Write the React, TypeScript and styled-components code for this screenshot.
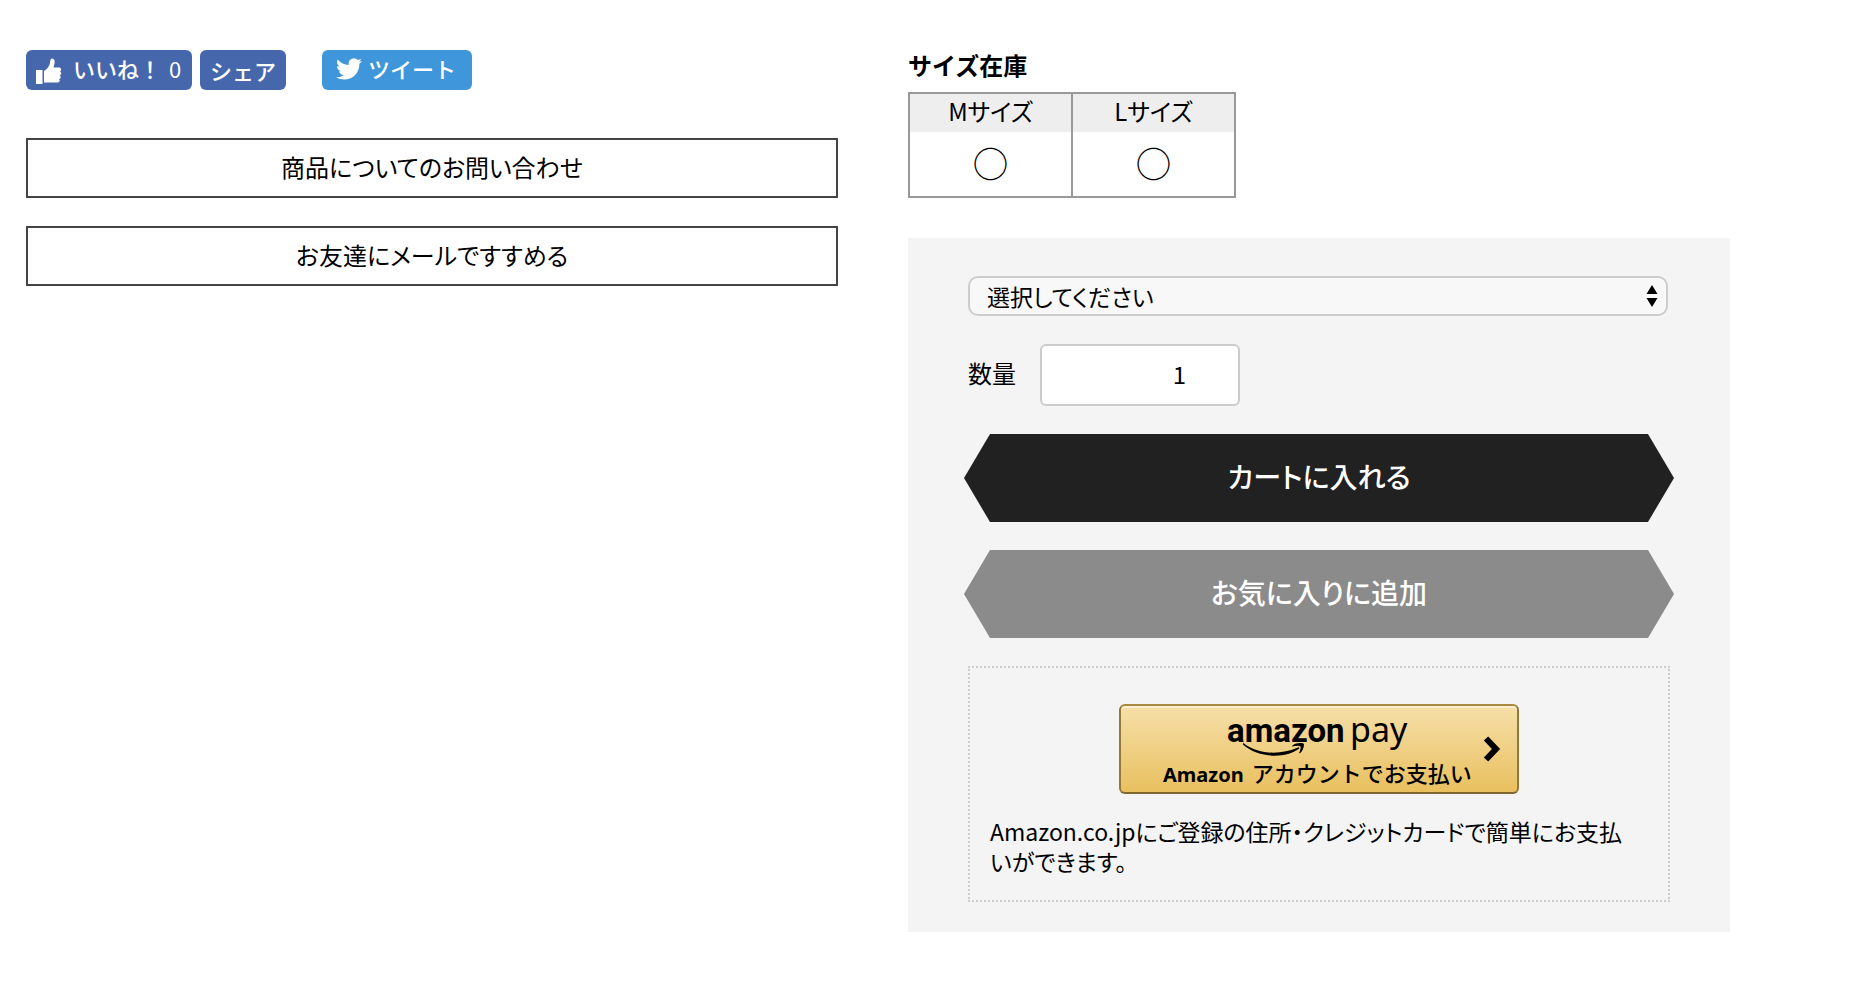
import React from "react";
import styled, { createGlobalStyle } from "styled-components";

const GlobalStyle = createGlobalStyle`
  *, *::before, *::after { box-sizing: border-box; }
  body {
    margin: 0;
    background: #fff;
    color: #000;
    font-family: "Noto Sans CJK JP", sans-serif;
    font-size: 24px;
    line-height: 36px;
    font-feature-settings: "palt";
  }
  button, input, select { font: inherit; color: inherit; font-feature-settings: inherit; }
`;

const Page = styled.main`
  display: grid;
  grid-template-columns: minmax(0, 812fr) minmax(0, 822fr);
  column-gap: 70px;
  align-items: start;
  padding: 50px 132px 50px 26px;
`;

const SocialBar = styled.div`
  display: flex;
  gap: 8px;
  margin-bottom: 48px;
`;

const SocialButton = styled.button<{ $color: string; $width: number }>`
  display: flex;
  align-items: center;
  justify-content: center;
  width: ${(p) => p.$width}px;
  height: 40px;
  padding: 0;
  border: 0;
  border-radius: 6px;
  background: ${(p) => p.$color};
  color: #fff;
  font-size: 22px;
  font-weight: 500;
  line-height: 40px;
  font-feature-settings: normal;
  white-space: nowrap;
  cursor: pointer;
`;

const LikeButton = styled(SocialButton)`
  justify-content: flex-start;
  padding: 0 10px 4px;
`;

const TweetButton = styled(SocialButton)`
  justify-content: flex-start;
  gap: 6px;
  margin-left: 28px;
  padding: 0 14px 4px;
`;

const ThumbIcon = styled.svg`
  width: 26px;
  height: 26px;
  margin: 6px 11px 0 0;
`;

const BirdIcon = styled.svg`
  width: 26px;
  height: 26px;
  margin-top: 2px;
`;

const Count = styled.span`
  margin-left: 8px;
  font-weight: 400;
`;

const LinkList = styled.div`
  display: grid;
  gap: 28px;
`;

const OutlineLink = styled.a`
  display: flex;
  align-items: center;
  justify-content: center;
  height: 60px;
  padding-bottom: 2px;
  border: 2px solid #444;
  color: #000;
  text-decoration: none;
`;

const Heading = styled.h2`
  margin: -3px 0 9px;
  font-size: 24px;
  font-weight: 700;
  line-height: 36px;
  font-feature-settings: normal;
`;

const StockTable = styled.table`
  width: 328px;
  border-collapse: collapse;
  table-layout: fixed;
  border: 2px solid #999;
  text-align: center;
`;

const StockHead = styled.th`
  height: 39px;
  padding: 0 0 4px;
  border-right: 2px solid #999;
  background: #eee;
  font-size: 24px;
  font-weight: 400;
  line-height: 34px;
`;

const StockCell = styled.td`
  height: 65px;
  padding: 0 0 2px;
  border-right: 2px solid #999;
  font-size: 34px;
  font-weight: 700;
  line-height: 48px;
`;

const OrderPanel = styled.form`
  display: flex;
  flex-direction: column;
  margin-top: 40px;
  padding: 38px 60px 30px;
  background: #f4f4f4;
`;

const SelectBox = styled.div`
  display: grid;
  align-items: center;
  margin: 0 2px 28px 0;
`;

const SizeSelect = styled.select`
  grid-area: 1 / 1;
  appearance: none;
  width: 100%;
  height: 40px;
  padding: 0 40px 0 17px;
  border: 2px solid #ccc;
  border-radius: 10px;
  background: #f8f8f8;
  font-size: 23px;
`;

const SelectArrows = styled.svg`
  grid-area: 1 / 1;
  justify-self: end;
  width: 12px;
  height: 22px;
  margin-right: 10px;
  pointer-events: none;
`;

const QuantityRow = styled.div`
  display: flex;
  align-items: center;
  gap: 24px;
  margin-bottom: 28px;
`;

const QuantityLabel = styled.label`
  padding-bottom: 4px;
`;

const QuantityInput = styled.input`
  width: 200px;
  height: 62px;
  padding: 0 52px 4px 12px;
  border: 2px solid #ccc;
  border-radius: 6px;
  background: #fff;
  text-align: right;
`;

const RibbonButton = styled.button<{ $color: string }>`
  height: 88px;
  margin: 0 -4px 28px;
  padding: 0 26px 4px;
  border: 0;
  background: ${(p) => p.$color};
  color: #fff;
  font-size: 28px;
  font-weight: 500;
  clip-path: polygon(0 50%, 26px 0, calc(100% - 26px) 0, 100% 50%, calc(100% - 26px) 100%, 26px 100%);
  cursor: pointer;
`;

const PayBox = styled.section`
  display: flex;
  flex-direction: column;
  align-items: center;
  padding: 36px 20px 24px;
  border: 2px dotted #ccc;
`;

const PayButton = styled.button`
  display: grid;
  grid-template-columns: 1fr 18px;
  align-items: center;
  width: 400px;
  max-width: 100%;
  height: 90px;
  padding: 0 16px 0 42px;
  border: 2px solid #8f7437;
  border-color: #a88a43 #947838 #806631;
  border-radius: 6px;
  background: linear-gradient(#f6dfa9, #e9c05f);
  box-shadow: inset 0 2px 0 #fbeecb;
  cursor: pointer;
`;

const PayLabel = styled.span`
  display: flex;
  flex-direction: column;
  align-items: flex-start;
  padding-top: 6px;
`;

const PayLogo = styled.svg`
  width: 188px;
  height: 42px;
  margin-left: 64px;
  overflow: visible;
`;

const PayText = styled.span`
  display: flex;
  align-items: baseline;
  gap: 8px;
  font-size: 22px;
  font-weight: 500;
  line-height: 32px;
  font-feature-settings: normal;
  white-space: nowrap;
`;

const PayBrand = styled.span`
  font-family: "Noto Sans", sans-serif;
  font-size: 20px;
  font-weight: 700;
`;

const Chevron = styled.svg`
  width: 18px;
  height: 26px;
`;

const PayNote = styled.p`
  align-self: stretch;
  margin: 22px 0 0;
  padding-right: 16px;
  font-size: 23px;
  line-height: 30px;
`;

const sizes = ["Mサイズ", "Lサイズ"];

export default function App() {
  return (
    <>
      <GlobalStyle />
      <Page>
        <div>
          <SocialBar>
            <LikeButton type="button" $color="#4767ad" $width={166}>
              <ThumbIcon viewBox="0 0 26 26" fill="#fff" aria-hidden="true">
                <path d="M0 12h6.500v14H0zM8 13c3-1.500 5.500-5 6-8 .3-2.500.5-4.500 2-4.500 2.300 0 3 2.200 2.600 4.500-.3 1.800-.8 3-1.100 4.500H23c1.500 0 2.200 1 2.200 2s-.6 1.800-1.400 2c1 .3 1.500 1 1.400 2-.1 1-.8 1.700-1.600 1.900.8.4 1.200 1 1.100 1.900-.1 1-.9 1.600-1.700 1.800.6.5.8 1 .7 1.700-.2 1-1 1.700-2.300 1.700H8z" />
              </ThumbIcon>
              いいね！<Count>0</Count>
            </LikeButton>
            <SocialButton type="button" $color="#4767ad" $width={86}>
              シェア
            </SocialButton>
            <TweetButton type="button" $color="#3f96db" $width={150}>
              <BirdIcon viewBox="0 0 24 24" fill="#fff" aria-hidden="true">
                <path d="M23.950 4.570a10 10 0 0 1-2.820.770 4.960 4.960 0 0 0 2.160-2.720c-.950.550-2 .950-3.130 1.180a4.920 4.920 0 0 0-8.380 4.480C7.690 8.100 4.070 6.130 1.640 3.160a4.900 4.900 0 0 0-.670 2.480c0 1.710.870 3.210 2.190 4.100a4.900 4.900 0 0 1-2.230-.620v.060a4.920 4.920 0 0 0 3.950 4.830 5 5 0 0 1-2.210.080 4.940 4.940 0 0 0 4.600 3.420A9.870 9.870 0 0 1 0 19.540a14 14 0 0 0 7.550 2.210c9.050 0 14-7.500 14-13.980 0-.210 0-.420-.020-.630a9.940 9.940 0 0 0 2.460-2.550z" />
              </BirdIcon>
              ツイート
            </TweetButton>
          </SocialBar>
          <LinkList>
            <OutlineLink href="#contact">商品についてのお問い合わせ</OutlineLink>
            <OutlineLink href="#recommend">お友達にメールですすめる</OutlineLink>
          </LinkList>
        </div>

        <div>
          <Heading>サイズ在庫</Heading>
          <StockTable>
            <thead>
              <tr>
                {sizes.map((size) => (
                  <StockHead key={size} scope="col">{size}</StockHead>
                ))}
              </tr>
            </thead>
            <tbody>
              <tr>
                {sizes.map((size) => (
                  <StockCell key={size}>◯</StockCell>
                ))}
              </tr>
            </tbody>
          </StockTable>

          <OrderPanel onSubmit={(e) => e.preventDefault()}>
            <SelectBox>
              <SizeSelect aria-label="サイズ" defaultValue="">
                <option value="">選択してください</option>
                {sizes.map((size) => (
                  <option key={size} value={size}>{size}</option>
                ))}
              </SizeSelect>
              <SelectArrows viewBox="0 0 12 22" aria-hidden="true">
                <path d="M6 0l5.500 9H.5zM.5 13h11L6 22z" />
              </SelectArrows>
            </SelectBox>
            <QuantityRow>
              <QuantityLabel htmlFor="quantity">数量</QuantityLabel>
              <QuantityInput id="quantity" type="text" inputMode="numeric" defaultValue="1" />
            </QuantityRow>
            <RibbonButton type="submit" $color="#212121">カートに入れる</RibbonButton>
            <RibbonButton type="button" $color="#8b8b8b">お気に入りに追加</RibbonButton>
            <PayBox>
              <PayButton type="button">
                <PayLabel>
                  <PayLogo viewBox="0 0 188 42">
                    <text x="0" y="28" fontFamily="Roboto, sans-serif" fontWeight="700" fontSize="33">amazon</text>
                    <text x="123" y="28" fontFamily="'Noto Sans', sans-serif" fontSize="34">pay</text>
                    <path d="M17 29.500C32 41 54 41 71 33.500c1-.5 1.800.5 1 1.200C58 45 31 44 16 30.500c-.6-.8.2-1.500 1-1zM65 32c1.500-2 5-3 8-3 2.200 0 4 .3 4 1.200 0 3-1.500 7-4 9-.8.3-1-.2-.7-.7 1-2.300 1.800-5 1.200-6-.8-1-4.500-.8-7.300-.2-1 .2-1.400 0-1.200-.3z" />
                  </PayLogo>
                  <PayText>
                    <PayBrand>Amazon</PayBrand>アカウントでお支払い
                  </PayText>
                </PayLabel>
                <Chevron viewBox="0 0 18 26" fill="none" stroke="#000" strokeWidth="6" aria-hidden="true">
                  <path d="M3 2.500L13 13 3 23.500" />
                </Chevron>
              </PayButton>
              <PayNote>
                Amazon.co.jpにご登録の住所・クレジットカードで簡単にお支払いができます。
              </PayNote>
            </PayBox>
          </OrderPanel>
        </div>
      </Page>
    </>
  );
}
